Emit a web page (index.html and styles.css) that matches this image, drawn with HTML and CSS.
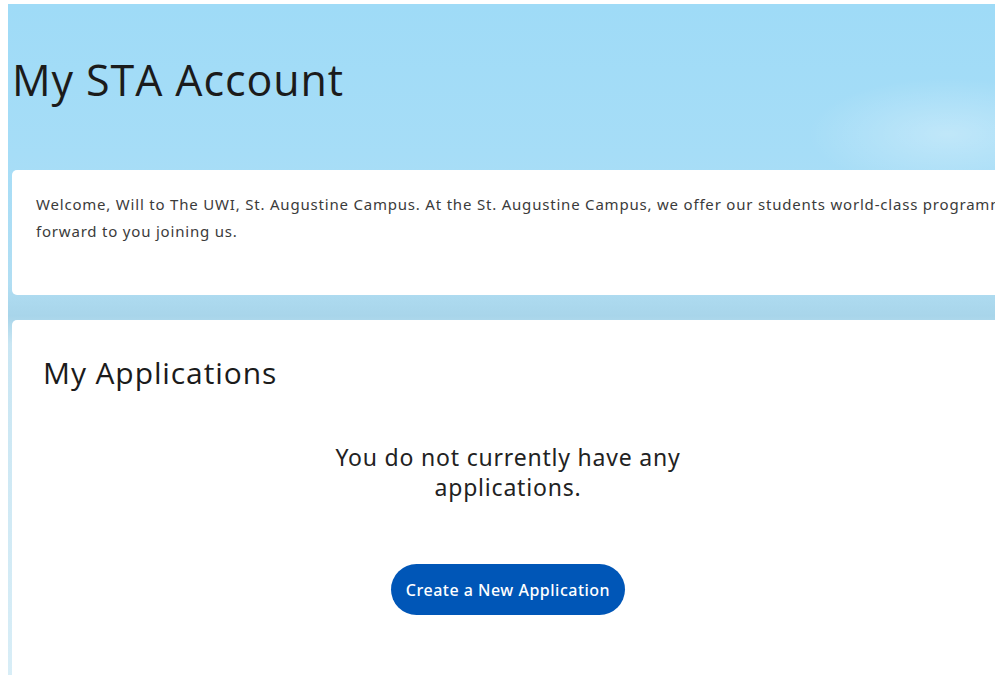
FILE: index.html
```html
<!DOCTYPE html>
<html lang="en">
<head>
<meta charset="utf-8">
<title>My STA Account</title>
<link rel="stylesheet" href="styles.css">
</head>
<body>
<div class="page">
  <header class="hero">
    <h1 class="hero-title">My STA Account</h1>
  </header>
  <main class="content">
    <section class="card welcome">
      <p>Welcome, Will to The UWI, St. Augustine Campus. At the St. Augustine Campus, we offer our students world-class programmes and a rich student life. We look forward to you joining us.</p>
    </section>
    <section class="card apps">
      <h2 class="apps-title">My Applications</h2>
      <div class="empty">
        <p class="empty-text">You do not currently have any applications.</p>
        <button class="btn-primary" type="button">Create a New Application</button>
      </div>
    </section>
  </main>
</div>
</body>
</html>
```
FILE: styles.css
```css
html, body {
  margin: 0;
  padding: 0;
  background: #ffffff;
  overflow: hidden;
}

body {
  padding: 4px 0 0 8px;
  font-family: "Open Sans", "Noto Sans", sans-serif;
  color: #222;
}

.page {
  width: 1000px;
  min-height: 700px;
  background:
    radial-gradient(ellipse 200px 80px at 940px 130px, rgba(255,255,255,0.3), rgba(255,255,255,0) 70%),
    linear-gradient(180deg, #9fdbf7 0px, #a6ddf7 150px, #b1def3 280px, #a8d5ea 312px, #c9e6f3 340px, #d9eef7 700px);
}

.hero {
  height: 166px;
  padding: 0 0 0 4px;
}

.hero-title {
  margin: 0;
  padding-top: 52px;
  font-size: 43px;
  font-weight: 400;
  line-height: 48px;
  color: #1b1b1b;
  letter-spacing: 0.9px;
}

.content {
  display: flex;
  flex-direction: column;
  gap: 25px;
  padding-left: 4px;
}

.card {
  background: #ffffff;
  border-radius: 5px;
  width: 1000px;
  box-sizing: border-box;
}

.welcome {
  height: 125px;
  padding: 21px 24px 0 24px;
}

.welcome p {
  margin: 0;
  width: 1290px;
  font-family: "Noto Sans", "Open Sans", sans-serif;
  font-size: 15px;
  letter-spacing: 0.8px;
  line-height: 27px;
  color: #3b3b3b;
}

.apps {
  height: 400px;
  padding: 33px 0 0 31px;
}

.apps-title {
  margin: 0;
  font-size: 30px;
  font-weight: 400;
  line-height: 40px;
  color: #1b1b1b;
  letter-spacing: 0.9px;
}

.empty {
  width: 930px;
  display: flex;
  flex-direction: column;
  align-items: center;
  padding-top: 49px;
}

.empty-text {
  margin: 0;
  width: 400px;
  text-align: center;
  font-family: "Noto Sans", "Open Sans", sans-serif;
  font-size: 23px;
  letter-spacing: 0.8px;
  line-height: 30px;
  color: #222;
}

.btn-primary {
  margin-top: 62px;
  width: 234px;
  height: 51px;
  border: none;
  border-radius: 26px;
  background: #0056b7;
  color: #ffffff;
  font-family: "Noto Sans", "Open Sans", sans-serif;
  font-size: 16px;
  font-weight: 500;
  letter-spacing: 0.5px;
  cursor: pointer;
}
```
